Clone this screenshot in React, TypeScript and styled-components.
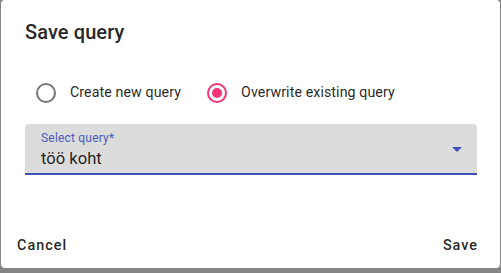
import React, { useState } from 'react';
import styled, { createGlobalStyle } from 'styled-components';

const GlobalStyle = createGlobalStyle`
	html, body {
		margin: 0;
		padding: 0;
		background: #858585;
		font-family: Roboto, 'Liberation Sans', sans-serif;
	}
	* {
		box-sizing: border-box;
	}
`;

const Dialog = styled.div`
	width: 499px;
	height: 268px;
	margin-left: 1px;
	background: #fff;
	border-radius: 4px;
	display: flex;
	flex-direction: column;
	color: rgba(0, 0, 0, 0.87);
`;

const Title = styled.h2`
	margin: 0;
	padding: 16px 24px 0;
	font-size: 20px;
	font-weight: 500;
	line-height: 32px;
	letter-spacing: 0.1px;
`;

const Content = styled.div`
	padding: 0 23px 0 24px;
	flex: 1;
`;

const RadioRow = styled.div`
	display: flex;
	align-items: center;
	margin-top: 24px;
`;

const Option = styled.label`
	display: flex;
	align-items: center;
	margin-right: 15px;
	cursor: pointer;
	font-size: 14.2px;
	line-height: 1.5;
	letter-spacing: 0.1px;
`;

const RadioBox = styled.span`
	width: 42px;
	height: 42px;
	display: flex;
	align-items: center;
	justify-content: center;
	margin-right: 3px;
`;

const Field = styled.div`
	position: relative;
	margin-top: 10px;
	height: 51px;
	background: #dcdcdc;
	border-radius: 4px 4px 0 0;
	border-bottom: 2px solid #3f51b5;
	padding: 7px 40px 0 16px;
`;

const FieldLabel = styled.div`
	font-size: 12px;
	line-height: 14px;
	color: #4a5bbd;
	letter-spacing: 0.2px;
`;

const FieldValue = styled.div`
	font-size: 16.6px;
	line-height: 24px;
	margin-top: 2px;
`;

const Arrow = styled.svg`
	position: absolute;
	right: 8px;
	top: 13px;
	width: 24px;
	height: 24px;
	fill: #3f51b5;
`;

const Actions = styled.div`
	display: flex;
	justify-content: space-between;
	align-items: center;
	padding: 0 14px 4px 8px;
`;

const Button = styled.button`
	border: none;
	background: none;
	padding: 6px 8px;
	font-family: Roboto, 'Liberation Sans', sans-serif;
	font-size: 14.4px;
	font-weight: 500;
	letter-spacing: 1px;
	line-height: 1.75;
	color: rgba(0, 0, 0, 0.87);
	cursor: pointer;
`;

const RadioIcon = ({ checked }: { checked: boolean }) => (
	<svg width="24" height="24" viewBox="0 0 24 24">
		<circle
			cx="12"
			cy="12"
			r="9"
			fill="none"
			strokeWidth="2"
			stroke={checked ? '#f73378' : 'rgba(0,0,0,0.54)'}
		/>
		{checked && <circle cx="12" cy="12" r="5" fill="#f73378" />}
	</svg>
);

export default function App() {
	const [mode, setMode] = useState<'new' | 'overwrite'>('overwrite');

	return (
		<>
			<GlobalStyle />
			<Dialog>
				<Title>Save query</Title>
				<Content>
					<RadioRow>
						<Option onClick={() => setMode('new')}>
							<RadioBox>
								<RadioIcon checked={mode === 'new'} />
							</RadioBox>
							Create new query
						</Option>
						<Option onClick={() => setMode('overwrite')}>
							<RadioBox>
								<RadioIcon checked={mode === 'overwrite'} />
							</RadioBox>
							Overwrite existing query
						</Option>
					</RadioRow>
					<Field>
						<FieldLabel>Select query*</FieldLabel>
						<FieldValue>töö koht</FieldValue>
						<Arrow viewBox="0 0 24 24">
							<path d="M7 10l5 5 5-5z" />
						</Arrow>
					</Field>
				</Content>
				<Actions>
					<Button>Cancel</Button>
					<Button>Save</Button>
				</Actions>
			</Dialog>
		</>
	);
}
